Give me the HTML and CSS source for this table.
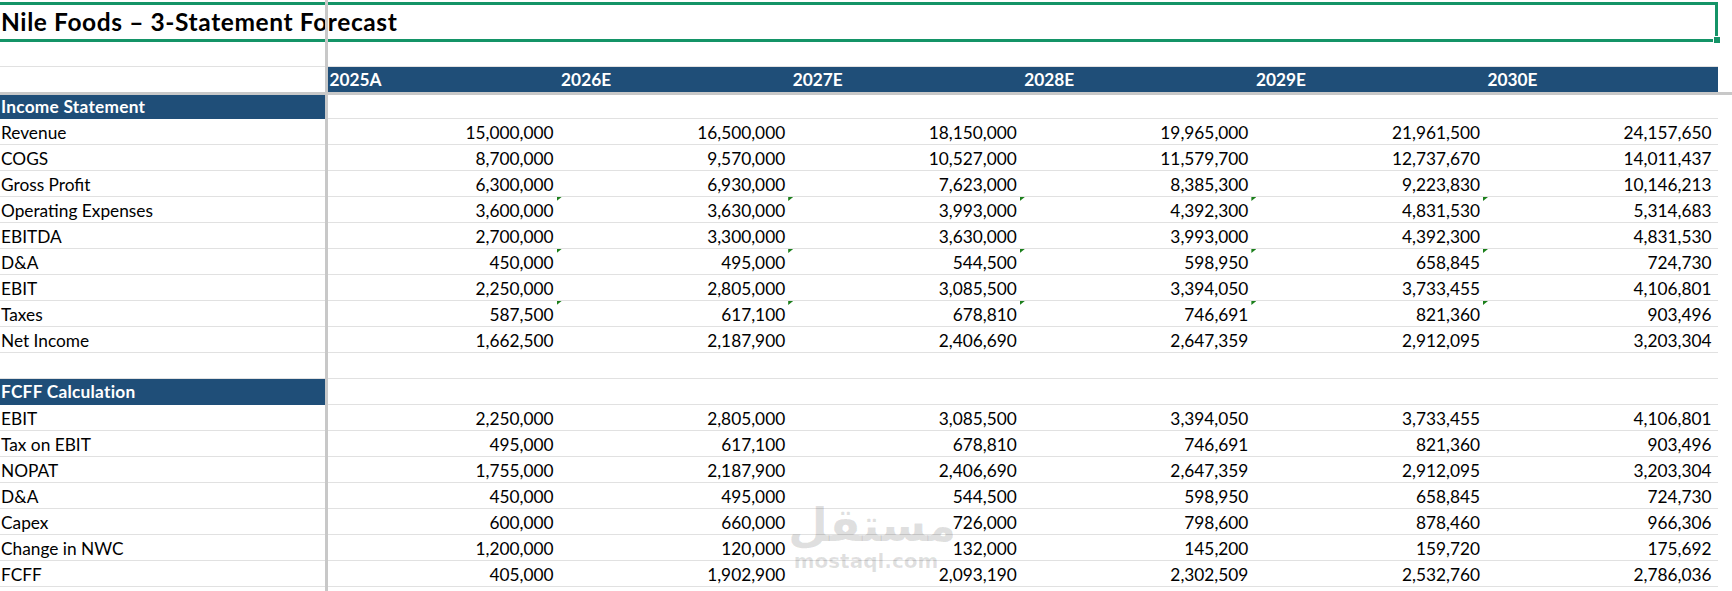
FILE: index.html
```html
<!DOCTYPE html>
<html>
<head>
<meta charset="utf-8">
<title>Nile Foods – 3-Statement Forecast</title>
<link rel="stylesheet" href="styles.css">
</head>
<body>
<div class="sheet">
  <div class="title-row">Nile Foods – 3-Statement Forecast</div>
  <div class="row blank2"></div>
  <div class="row hdr">
    <div class="c lab"></div>
    <div class="c yr">2025A</div><div class="c yr">2026E</div><div class="c yr">2027E</div><div class="c yr">2028E</div><div class="c yr">2029E</div><div class="c yr">2030E</div>
  </div>
  <div class="freeze-h"></div>
  <div class="row sec first"><div class="c lab">Income Statement</div></div>
  <div class="row"><div class="c lab">Revenue</div><div class="c v">15,000,000</div><div class="c v">16,500,000</div><div class="c v">18,150,000</div><div class="c v">19,965,000</div><div class="c v">21,961,500</div><div class="c v">24,157,650</div></div>
  <div class="row"><div class="c lab">COGS</div><div class="c v">8,700,000</div><div class="c v">9,570,000</div><div class="c v">10,527,000</div><div class="c v">11,579,700</div><div class="c v">12,737,670</div><div class="c v">14,011,437</div></div>
  <div class="row"><div class="c lab">Gross Profit</div><div class="c v">6,300,000</div><div class="c v">6,930,000</div><div class="c v">7,623,000</div><div class="c v">8,385,300</div><div class="c v">9,223,830</div><div class="c v">10,146,213</div></div>
  <div class="row"><div class="c lab">Operating Expenses</div><div class="c v t">3,600,000</div><div class="c v t">3,630,000</div><div class="c v t">3,993,000</div><div class="c v t">4,392,300</div><div class="c v t">4,831,530</div><div class="c v">5,314,683</div></div>
  <div class="row"><div class="c lab">EBITDA</div><div class="c v">2,700,000</div><div class="c v">3,300,000</div><div class="c v">3,630,000</div><div class="c v">3,993,000</div><div class="c v">4,392,300</div><div class="c v">4,831,530</div></div>
  <div class="row"><div class="c lab">D&amp;A</div><div class="c v t">450,000</div><div class="c v t">495,000</div><div class="c v t">544,500</div><div class="c v t">598,950</div><div class="c v t">658,845</div><div class="c v">724,730</div></div>
  <div class="row"><div class="c lab">EBIT</div><div class="c v">2,250,000</div><div class="c v">2,805,000</div><div class="c v">3,085,500</div><div class="c v">3,394,050</div><div class="c v">3,733,455</div><div class="c v">4,106,801</div></div>
  <div class="row"><div class="c lab">Taxes</div><div class="c v t">587,500</div><div class="c v t">617,100</div><div class="c v t">678,810</div><div class="c v t">746,691</div><div class="c v t">821,360</div><div class="c v">903,496</div></div>
  <div class="row"><div class="c lab">Net Income</div><div class="c v">1,662,500</div><div class="c v">2,187,900</div><div class="c v">2,406,690</div><div class="c v">2,647,359</div><div class="c v">2,912,095</div><div class="c v">3,203,304</div></div>
  <div class="row"></div>
  <div class="row sec"><div class="c lab">FCFF Calculation</div></div>
  <div class="row"><div class="c lab">EBIT</div><div class="c v">2,250,000</div><div class="c v">2,805,000</div><div class="c v">3,085,500</div><div class="c v">3,394,050</div><div class="c v">3,733,455</div><div class="c v">4,106,801</div></div>
  <div class="row"><div class="c lab">Tax on EBIT</div><div class="c v">495,000</div><div class="c v">617,100</div><div class="c v">678,810</div><div class="c v">746,691</div><div class="c v">821,360</div><div class="c v">903,496</div></div>
  <div class="row"><div class="c lab">NOPAT</div><div class="c v">1,755,000</div><div class="c v">2,187,900</div><div class="c v">2,406,690</div><div class="c v">2,647,359</div><div class="c v">2,912,095</div><div class="c v">3,203,304</div></div>
  <div class="row"><div class="c lab">D&amp;A</div><div class="c v">450,000</div><div class="c v">495,000</div><div class="c v">544,500</div><div class="c v">598,950</div><div class="c v">658,845</div><div class="c v">724,730</div></div>
  <div class="row"><div class="c lab">Capex</div><div class="c v">600,000</div><div class="c v">660,000</div><div class="c v">726,000</div><div class="c v">798,600</div><div class="c v">878,460</div><div class="c v">966,306</div></div>
  <div class="row"><div class="c lab">Change in NWC</div><div class="c v">1,200,000</div><div class="c v">120,000</div><div class="c v">132,000</div><div class="c v">145,200</div><div class="c v">159,720</div><div class="c v">175,692</div></div>
  <div class="row"><div class="c lab">FCFF</div><div class="c v">405,000</div><div class="c v">1,902,900</div><div class="c v">2,093,190</div><div class="c v">2,302,509</div><div class="c v">2,532,760</div><div class="c v">2,786,036</div></div>
  <div class="row"></div>
</div>
<div class="selection"><div class="handle"></div></div>
<div class="freeze-v"></div>
<div class="watermark"><div class="wm-ar">مستقل</div><div class="wm-en">mostaql.com</div></div>
</body>
</html>
```
FILE: styles.css
```css
html, body {
  margin: 0;
  padding: 0;
  background: #ffffff;
}
body {
  width: 1732px;
  height: 591px;
  overflow: hidden;
  position: relative;
  font-family: Lato, "Open Sans", sans-serif;
  font-size: 17.3px;
  color: #000000;
}
.sheet {
  width: 1732px;
}
.title-row {
  height: 42px;
  box-sizing: border-box;
  padding: 2px 0 0 1px;
  line-height: 40px;
  font-size: 24.5px;
  letter-spacing: 0.6px;
  font-weight: 700;
  white-space: nowrap;
}
.row {
  width: 1717.6px;
  height: 26px;
  box-sizing: border-box;
  border-bottom: 1px solid #e1e1e1;
  display: grid;
  grid-template-columns: 328px repeat(6, 231.6px);
  line-height: 25px;
  padding-top: 1px;
}
.row.blank2 {
  height: 25px;
  padding-top: 0;
}
.row.hdr {
  height: 25px;
  border-bottom: none;
  line-height: 24px;
  padding-top: 1px;
  font-weight: 700;
  color: #ffffff;
  background: linear-gradient(to right, #ffffff 328px, #1f4e78 328px);
}
.row.hdr .yr {
  padding-left: 1.5px;
}
.freeze-h {
  width: 1732px;
  height: 3px;
  background: #c8c8c8;
}
.row.sec {
  padding-top: 0;
}
.row.sec .lab {
  background: #1f4e78;
  color: #ffffff;
  font-weight: 700;
  letter-spacing: 0.25px;
  margin-bottom: -1px;
}
.row.sec.first {
  height: 24px;
  line-height: 23px;
}
.c {
  position: relative;
  white-space: nowrap;
}
.lab {
  padding-left: 1px;
}
.v {
  text-align: right;
  padding-right: 6px;
}
.t::after {
  content: "";
  position: absolute;
  right: -2px;
  top: -1px;
  width: 5px;
  height: 4px;
  background: #1b7f1b;
  clip-path: polygon(0 0, 100% 0, 0 100%);
}
.selection {
  position: absolute;
  left: -3px;
  top: 2px;
  width: 1721px;
  height: 40px;
  box-sizing: border-box;
  border: 3px solid #149467;
}
.handle {
  position: absolute;
  right: -5px;
  bottom: -4px;
  width: 6px;
  height: 6px;
  background: #149467;
  box-shadow: 0 0 0 1px #ffffff;
}
.freeze-v {
  position: absolute;
  left: 325px;
  top: 0;
  width: 3px;
  height: 591px;
  background: #c8c8c8;
}
.watermark {
  position: absolute;
  left: 788px;
  top: 500px;
  width: 156px;
  color: rgba(0, 0, 0, 0.12);
  font-family: "DejaVu Sans", sans-serif;
  font-weight: 700;
  text-align: center;
}
.wm-ar {
  font-size: 46px;
  line-height: 50px;
}
.wm-en {
  font-size: 20px;
  line-height: 22px;
}
```
